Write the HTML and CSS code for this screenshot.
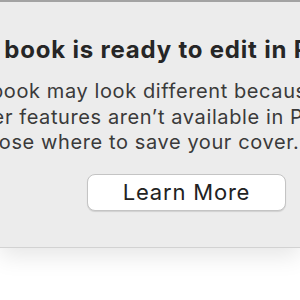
FILE: index.html
```html
<!DOCTYPE html>
<html>
<head>
<meta charset="utf-8">
<link rel="stylesheet" href="styles.css">
</head>
<body>
<div class="dialog">
  <div class="inner">
    <h1 class="title">Your book is ready to edit in Pages</h1>
    <p class="msg">Your book may look different because<br>some other features aren’t available in Pages.<br>Choose where to save your cover.</p>
    <div class="actions">
      <button class="btn">Learn More</button>
    </div>
  </div>
</div>
</body>
</html>
```
FILE: styles.css
```css
html, body {
  margin: 0;
  padding: 0;
  background: #ffffff;
  width: 300px;
  height: 300px;
  overflow: hidden;
}
.dialog {
  height: 245px;
  background: #ececec;
  border-top: 2px solid #a3a3a3;
  border-bottom: 1px solid #d2d2d2;
  box-shadow: 0 8px 22px rgba(0,0,0,0.10);
  overflow: hidden;
}
.inner {
  width: 600px;
  margin-left: -145px;
  text-align: center;
  font-family: Inter, "Liberation Sans", sans-serif;
}
.title {
  margin: 0;
  padding-top: 35px;
  font-size: 24px;
  line-height: 26px;
  font-weight: 700;
  letter-spacing: 0.8px;
  color: #262626;
}
.msg {
  margin: 0;
  padding-top: 16px;
  padding-right: 52px;
  font-size: 20px;
  line-height: 25.5px;
  letter-spacing: 0.6px;
  color: #3a3a3a;
}
.actions {
  padding-top: 18px;
  padding-left: 87px;
  text-align: left;
  margin-left: 145px;
}
.btn {
  width: 199px;
  height: 37px;
  background: #ffffff;
  border: 1px solid #c4c4c4;
  border-radius: 8px;
  box-shadow: 0 1px 1px rgba(0,0,0,0.12);
  font-family: Inter, "Liberation Sans", sans-serif;
  font-size: 22px;
  letter-spacing: 0.8px;
  color: #222;
  padding: 0;
}
```
